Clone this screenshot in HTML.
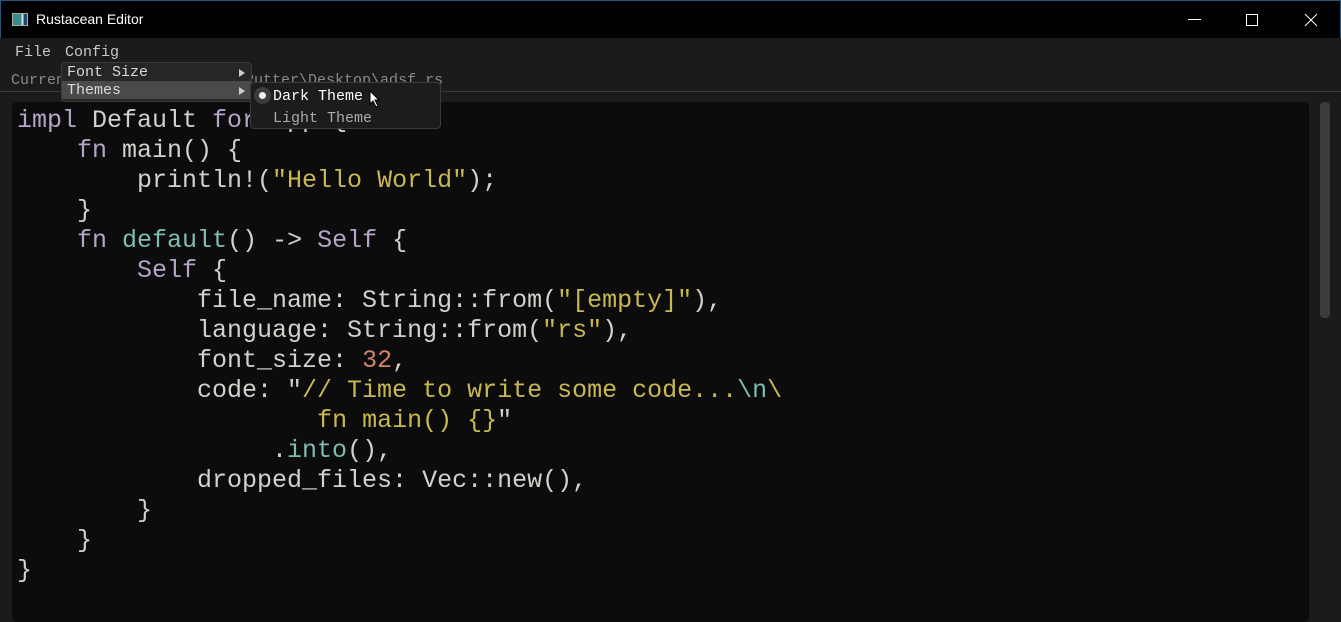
<!DOCTYPE html>
<html><head><meta charset="utf-8"><style>
*{margin:0;padding:0;box-sizing:border-box}
body{width:1341px;height:609px;background:#1b1b1b;overflow:hidden;position:relative;font-family:"Liberation Mono",monospace}
.title{position:absolute;left:0;top:0;width:1341px;height:38px;background:#000;border:1px solid #2b5576;border-bottom:none}
.title span{position:absolute;left:35px;top:10px;font:14px "Liberation Sans",sans-serif;color:#fff}
.ico{position:absolute;left:11px;top:12px;width:16px;height:13px;background:linear-gradient(90deg,#3a8a8a 0 60%,#ddd 60% 75%,#1a4a6a 75%);border:1px solid #aaa}
.menu{position:absolute;top:44px;font-size:15px;color:#c8c8c8}
.line91{position:absolute;left:0;top:91px;width:1341px;height:1px;background:#3a3a3a}
.path{position:absolute;left:11px;top:72px;font-size:15px;color:#8a8a8a;white-space:pre}
.code{position:absolute;left:12px;top:102px;width:1297px;height:520px;background:#0c0c0c;border-radius:5px}
.sb{position:absolute;left:1320px;top:102px;width:10px;height:216px;background:#3c3c3c;border-radius:4px}
pre{position:absolute;left:17px;top:106px;font:25px/30px "Liberation Mono",monospace;color:#d4d0cc;letter-spacing:0}
.k{color:#b6a4c8}.f{color:#7fbcb2}.s{color:#c9b851}.n{color:#d5826c}
.dd{position:absolute;left:61px;top:62px;width:191px;height:40px;background:#262626;border:1px solid #3a3a3a;border-radius:4px;font-size:15px;color:#d8d8d8}
.dd div{height:18px;padding-left:5px;line-height:20px;position:relative}
.dd .hl{background:#4a4a4a}
.tri{position:absolute;right:6px;top:6px;width:0;height:0;border-left:6px solid #ccc;border-top:4px solid transparent;border-bottom:4px solid transparent}
.sub{position:absolute;left:250px;top:82px;width:191px;height:47px;background:#1c1c1c;border:1px solid #3a3a3a;border-radius:4px;font-size:15px}
.rad{position:absolute;left:3px;top:4px;width:17px;height:17px;border-radius:50%;background:#3c3c3c}
.rad:after{content:"";position:absolute;left:5px;top:5px;width:7px;height:7px;border-radius:50%;background:#eee}
</style></head><body>
<div class="title"><div class="ico"></div><span>Rustacean Editor</span>
<svg style="position:absolute;left:1180px;top:10px" width="150" height="20"><line x1="7" y1="8.5" x2="20" y2="8.5" stroke="#fff"/><rect x="65.5" y="3.5" width="11" height="11" fill="none" stroke="#fff"/><path d="M124 3L136 15M136 3L124 15" stroke="#fff"/></svg></div>
<div class="menu" style="left:15px">File</div><div class="menu" style="left:65px">Config</div>
<div class="path">Current file: C:\Users\Jo Putter\Desktop\adsf.rs</div>
<div class="line91"></div>
<div class="code"></div><div class="sb"></div>
<pre><span class="k">impl</span> Default <span class="k">for</span> App {
    <span class="k">fn</span> main() {
        println!(<span class="s">"Hello World"</span>);
    }
    <span class="k">fn</span> <span class="f">default</span>() -&gt; <span class="k">Self</span> {
        <span class="k">Self</span> {
            file_name: String::from(<span class="s">"[empty]"</span>),
            language: String::from(<span class="s">"rs"</span>),
            font_size: <span class="n">32</span>,
            code: "<span class="s">// Time to write some code...</span><span class="f">\n</span><span class="s">\</span>
                    <span class="s">fn main() {}</span>"
                 .<span class="f">into</span>(),
            dropped_files: Vec::new(),
        }
    }
}</pre>
<div class="dd"><div>Font Size<i class="tri"></i></div><div class="hl">Themes<i class="tri"></i></div></div>
<div class="sub"><div class="rad"></div><div style="position:absolute;left:22px;top:5px;color:#fff">Dark Theme</div><div style="position:absolute;left:22px;top:27px;color:#aaa">Light Theme</div></div>
<svg style="position:absolute;left:369px;top:90px" width="12" height="18"><path d="M1 1L1 14L4 11L7 17L9 16L6 10L10 10Z" fill="#fff" stroke="#000" stroke-width="1"/></svg>
</body></html>
